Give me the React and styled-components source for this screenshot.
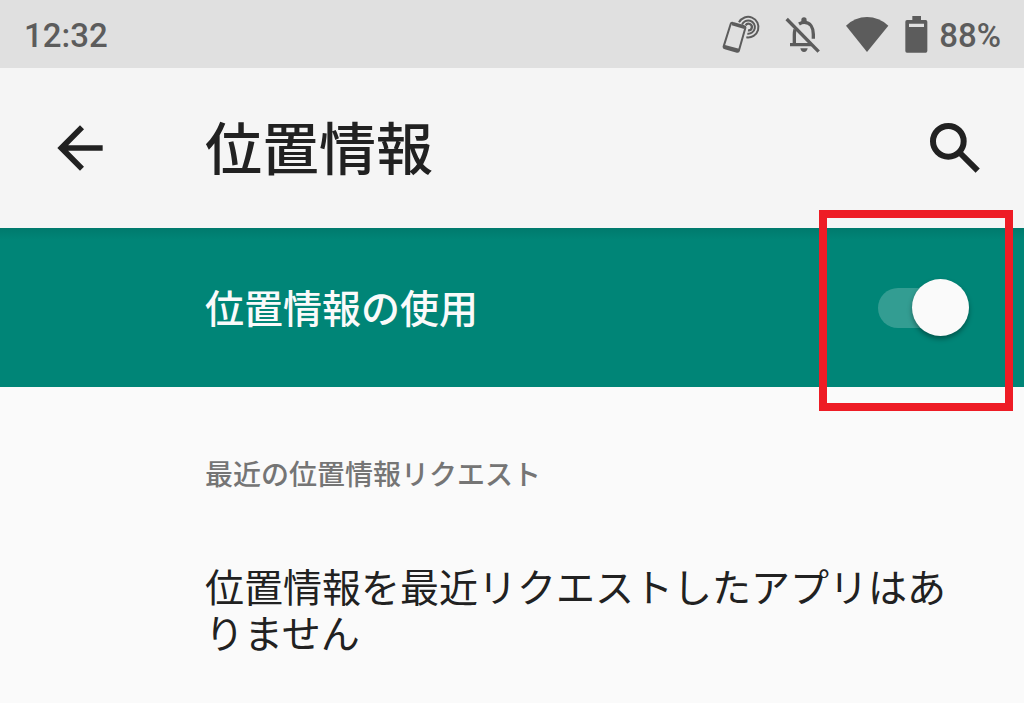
import React from "react";
import styled, { createGlobalStyle } from "styled-components";
import { MdArrowBack } from "react-icons/md";

const GlobalStyle = createGlobalStyle`
  * { box-sizing: border-box; }
  html { min-height: 100%; background: #fafafa; }
  body {
    margin: 0;
    background: #fafafa;
    color: #212121;
    font-family: Roboto, "Noto Sans CJK JP", sans-serif;
  }
`;

const StatusBar = styled.div`
  display: flex;
  align-items: center;
  justify-content: space-between;
  height: 68px;
  padding: 4px 23px 0 24px;
  background: #e0e0e0;
  color: #5c5c5c;
  font-size: 33px;
  font-weight: 500;
  line-height: 40px;
`;

const StatusIcons = styled.div`
  display: flex;
  align-items: center;
  gap: 24px;
`;

const Battery = styled.div`
  display: flex;
  align-items: center;
  gap: 11px;
  margin-left: -9px;
`;

const StatusIcon = styled.svg`
  display: block;
  flex: none;
  margin-bottom: 4px;
`;

const AppBar = styled.header`
  display: flex;
  align-items: center;
  height: 160px;
  padding: 0 35px 0 46px;
  background: #f5f5f5;
`;

const IconButton = styled.button`
  display: block;
  flex: none;
  padding: 0;
  border: 0;
  background: none;
  color: #212121;
  font-size: 68px;
  line-height: 0;
  cursor: pointer;
`;

const Title = styled.h1`
  flex: 1;
  margin: 0 0 0 91px;
  padding-top: 6px;
  font-size: 57px;
  font-weight: 500;
  line-height: 80px;
`;

const SwitchBar = styled.div`
  display: flex;
  align-items: center;
  justify-content: space-between;
  height: 159px;
  padding: 0 55px 0 205px;
  background: linear-gradient(#007a6d, #008577 12px);
  color: #fafafa;
`;

const SwitchLabel = styled.label`
  padding-top: 4px;
  font-size: 39px;
  font-weight: 500;
  line-height: 56px;
`;

const SwitchHolder = styled.div`
  position: relative;
  display: flex;
`;

const Switch = styled.input`
  appearance: none;
  display: flex;
  align-items: center;
  justify-content: flex-end;
  width: 91px;
  height: 40px;
  margin: 0;
  border-radius: 20px;
  background: #339d92;
  cursor: pointer;

  &::before {
    content: "";
    flex: none;
    width: 57px;
    height: 57px;
    border-radius: 50%;
    background: #fafafa;
    box-shadow: 0 3px 5px rgba(0, 0, 0, 0.35);
  }

  &:not(:checked) {
    justify-content: flex-start;
  }
`;

const Highlight = styled.div`
  position: absolute;
  inset: -78px -44px -83px -59px;
  border: 8px solid #ee1c25;
  pointer-events: none;
`;

const Content = styled.main`
  padding: 69px 64px 40px 205px;
`;

const SectionTitle = styled.h2`
  margin: 0;
  color: #757575;
  font-size: 28px;
  font-weight: 500;
  line-height: 40px;
`;

const Message = styled.p`
  margin: 70px 0 0;
  font-size: 39px;
  font-weight: 400;
  line-height: 46px;
`;

function PhoneSignalIcon() {
  return (
    <StatusIcon width="39" height="38" viewBox="66 45 117 114" fill="none" stroke="#5c5c5c" aria-hidden="true">
      <path d="M99 69 L133 79 Q137 80 136 84 L117 151 Q116 156 111 155 L75 145 Q70 144 71 139 L92 72 Q94 67 99 69 Z" strokeWidth="6" />
      <path d="M72 134 L120 147 L116 156 L72 145 Z" fill="#5c5c5c" stroke="none" />
      <path d="M96 69 L135 81 L133 87 L95 76 Z" fill="#5c5c5c" stroke="none" />
      <path d="M117 67 A31 31 0 1 1 139 112" strokeWidth="6" />
      <path d="M126 74 A20 20 0 1 1 142 101" strokeWidth="6" />
      <path d="M137 76 A10 10 0 1 1 144 91" strokeWidth="7" />
    </StatusIcon>
  );
}

function BellOffIcon() {
  return (
    <StatusIcon width="36" height="37" viewBox="255 48 108 111" fill="none" stroke="#5c5c5c" aria-hidden="true">
      <path d="M260 57 L356 155" strokeWidth="10" />
      <path d="M285 88 Q283 96 283 104 V133 M270 134 H334" strokeWidth="10" />
      <path d="M297 72 Q305 67 313 67 C331 67 340 83 340 103 V116" strokeWidth="10" />
      <path d="M304 66 V60 Q304 52 312 52 Q320 52 320 60 V66 Z" fill="#5c5c5c" stroke="none" />
      <path d="M301 145 H323 Q321 156 312 156 Q303 156 301 145 Z" fill="#5c5c5c" stroke="none" />
    </StatusIcon>
  );
}

function WifiIcon() {
  return (
    <StatusIcon width="44" height="37" viewBox="435 45 132 111" fill="#5c5c5c" aria-hidden="true">
      <path d="M438 74 Q465 48 501 48 Q537 48 565 74 L501 153 Z" />
    </StatusIcon>
  );
}

function BatteryIcon() {
  return (
    <StatusIcon width="24" height="37" viewBox="612 45 72 111" fill="#5c5c5c" aria-hidden="true">
      <path fillRule="evenodd" d="M637 45 H663 V57 H677 Q682 57 682 62 V150 Q682 155 677 155 H621 Q616 155 616 150 V62 Q616 57 621 57 H637 Z M627 68 V78 H672 V68 Z" />
    </StatusIcon>
  );
}

function SearchIcon() {
  return (
    <svg width="68" height="68" viewBox="0 0 204 204" fill="none" stroke="currentColor" aria-hidden="true">
      <circle cx="82" cy="82" r="46" strokeWidth="18" />
      <path d="M114 114 L170 170" strokeWidth="18" />
    </svg>
  );
}

export default function App() {
  return (
    <>
      <GlobalStyle />
      <StatusBar>
        <time>12:32</time>
        <StatusIcons>
          <PhoneSignalIcon />
          <BellOffIcon />
          <WifiIcon />
          <Battery>
            <BatteryIcon />
            <span>88%</span>
          </Battery>
        </StatusIcons>
      </StatusBar>
      <AppBar>
        <IconButton type="button" aria-label="戻る">
          <MdArrowBack />
        </IconButton>
        <Title>位置情報</Title>
        <IconButton type="button" aria-label="検索">
          <SearchIcon />
        </IconButton>
      </AppBar>
      <SwitchBar>
        <SwitchLabel htmlFor="location">位置情報の使用</SwitchLabel>
        <SwitchHolder>
          <Switch id="location" type="checkbox" role="switch" defaultChecked />
          <Highlight />
        </SwitchHolder>
      </SwitchBar>
      <Content>
        <SectionTitle>最近の位置情報リクエスト</SectionTitle>
        <Message>位置情報を最近リクエストしたアプリはありません</Message>
      </Content>
    </>
  );
}
